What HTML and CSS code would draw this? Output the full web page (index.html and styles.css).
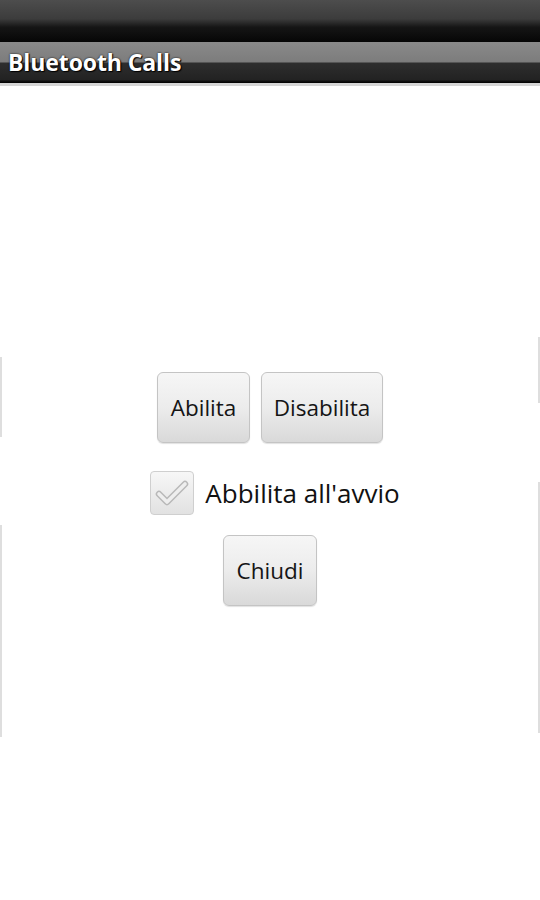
FILE: index.html
```html
<!DOCTYPE html>
<html>
<head>
<meta charset="utf-8">
<link rel="stylesheet" href="styles.css">
</head>
<body>
<div class="status-bar"></div>
<div class="title-bar"><span class="title">Bluetooth Calls</span></div>
<main class="content">
  <div class="edge edge-left-1"></div>
  <div class="edge edge-left-2"></div>
  <div class="edge edge-right-1"></div>
  <div class="edge edge-right-2"></div>
  <div class="row buttons-row">
    <button class="btn btn-abilita">Abilita</button>
    <button class="btn btn-disabilita">Disabilita</button>
  </div>
  <label class="row check-row">
    <span class="checkbox">
      <svg width="34" height="28" viewBox="0 0 34 28">
        <path d="M4 15 L12 23 L30 5" fill="none" stroke="#b8b8b8" stroke-width="6.5" stroke-linecap="round" stroke-linejoin="round"/>
        <path d="M4 15 L12 23 L30 5" fill="none" stroke="#eeeeee" stroke-width="3.6" stroke-linecap="round" stroke-linejoin="round"/>
      </svg>
    </span>
    <span class="check-label">Abbilita all'avvio</span>
  </label>
  <div class="row">
    <button class="btn btn-chiudi">Chiudi</button>
  </div>
</main>
</body>
</html>
```
FILE: styles.css
```css
html, body {
  margin: 0;
  padding: 0;
  background: #ffffff;
}
body {
  width: 540px;
  height: 900px;
  overflow: hidden;
  font-family: "Open Sans", "Noto Sans", sans-serif;
}
.status-bar {
  height: 42px;
  background: linear-gradient(to bottom, #4d4d4d 0%, #3c3c3c 45%, #151515 65%, #060606 100%);
}
.title-bar {
  height: 41px;
  background: linear-gradient(to bottom, #8a8a8a 0px, #7c7c7c 20px, #2e2e2e 21px, #222222 38px, #111 39px, #000 41px);
  border-bottom: 3px solid #d5d5d5;
  display: flex;
  align-items: center;
  padding-left: 8px;
}
.title {
  color: #ffffff;
  font-weight: 700;
  font-size: 23px;
  letter-spacing: -0.1px;
  text-shadow: 0 0 2px #000, 1px 1px 1px #000;
  position: relative;
  top: -1px;
}
.content {
  position: relative;
  height: 815px;
  padding-top: 286px;
  box-sizing: border-box;
  display: flex;
  flex-direction: column;
  align-items: center;
}
.row {
  display: flex;
  align-items: center;
  justify-content: center;
}
.buttons-row {
  gap: 11px;
}
.btn {
  height: 71px;
  border: 1px solid #c4c4c4;
  border-radius: 6px;
  background: linear-gradient(to bottom, #f6f6f6 0%, #ececec 50%, #d9d9d9 100%);
  box-shadow: 0 1px 1px rgba(0,0,0,0.12);
  font-family: "Open Sans", "Noto Sans", sans-serif;
  font-size: 22.5px;
  color: #151515;
  padding: 0;
  margin: 0;
}
.btn-abilita { width: 93px; }
.btn-disabilita { width: 122px; }
.btn-chiudi { width: 94px; }
.check-row {
  margin-top: 28px;
  margin-bottom: 20px;
  gap: 11px;
  margin-left: 10px;
}
.checkbox {
  width: 44px;
  height: 44px;
  box-sizing: border-box;
  border: 1px solid #cfcfcf;
  border-radius: 4px;
  background: linear-gradient(to bottom, #f7f7f7 0%, #e2e2e2 100%);
  display: flex;
  align-items: center;
  justify-content: center;
}
.check-label {
  font-size: 26px;
  color: #111;
}
.edge {
  position: absolute;
  width: 2px;
  background: #dedede;
}
.edge-left-1 { left: 0; top: 271px; height: 80px; }
.edge-left-2 { left: 0; top: 439px; height: 212px; }
.edge-right-1 { right: 0; top: 251px; height: 66px; }
.edge-right-2 { right: 0; top: 396px; height: 251px; }
```
